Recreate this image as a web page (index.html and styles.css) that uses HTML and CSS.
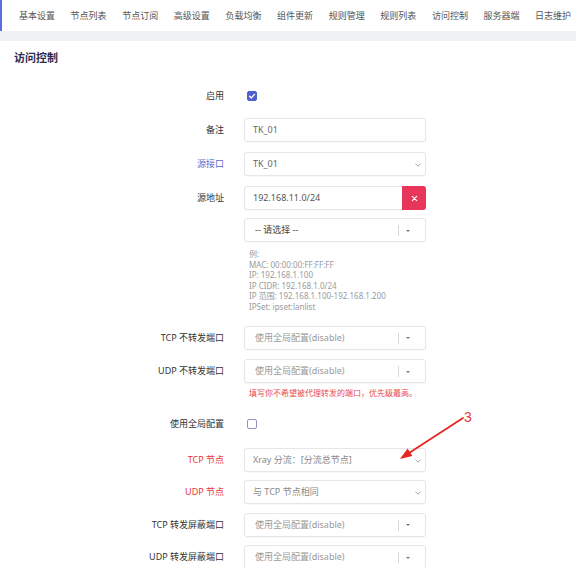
FILE: index.html
```html
<!DOCTYPE html>
<html lang="zh-CN">
<head>
<meta charset="utf-8">
<title>访问控制</title>
<link rel="stylesheet" href="styles.css">
</head>
<body>
<nav class="tabs">
  <span class="tab">基本设置</span>
  <span class="tab">节点列表</span>
  <span class="tab">节点订阅</span>
  <span class="tab">高级设置</span>
  <span class="tab">负载均衡</span>
  <span class="tab">组件更新</span>
  <span class="tab">规则管理</span>
  <span class="tab">规则列表</span>
  <span class="tab">访问控制</span>
  <span class="tab">服务器端</span>
  <span class="tab">日志维护</span>
</nav>
<div class="band"></div>
<main class="card">
  <h2 class="title">访问控制</h2>

  <div class="row r-enable">
    <div class="label">启用</div>
    <div class="control"><span class="checkbox checked"><svg viewBox="0 0 10 10" width="10" height="10"><polyline points="2.6,5.2 4.3,6.9 7.5,3.4" fill="none" stroke="#fff" stroke-width="1.4" stroke-linecap="round" stroke-linejoin="round"/></svg></span></div>
  </div>

  <div class="row r-std">
    <div class="label">备注</div>
    <div class="control"><div class="field text-dim">TK_01</div></div>
  </div>

  <div class="row r-std">
    <div class="label blue">源接口</div>
    <div class="control"><div class="field select text-dim">TK_01<svg class="chev" viewBox="0 0 6 4" width="6" height="4"><polyline points="0.5,0.6 3,3.2 5.5,0.6" fill="none" stroke="#999" stroke-width="0.9"/></svg></div></div>
  </div>

  <div class="row r-src">
    <div class="label">源地址</div>
    <div class="control">
      <div class="group">
        <div class="field grow text-mid">192.168.11.0/24</div>
        <div class="remove"><svg viewBox="0 0 8 8" width="7" height="7"><path d="M1.5 1.5 L6.5 6.5 M6.5 1.5 L1.5 6.5" stroke="#fff" stroke-width="1.3" stroke-linecap="round"/></svg></div>
      </div>
      <div class="field chosen second text-dark">-- 请选择 --<span class="divider"></span><span class="tri"></span></div>
      <div class="help">例:<br>MAC: 00:00:00:FF:FF:FF<br>IP: 192.168.1.100<br>IP CIDR: 192.168.1.0/24<br>IP 范围: 192.168.1.100-192.168.1.200<br>IPSet: ipset:lanlist</div>
    </div>
  </div>

  <div class="row r-tcpno">
    <div class="label">TCP 不转发端口</div>
    <div class="control"><div class="field chosen text-ph">使用全局配置(disable)<span class="divider"></span><span class="tri"></span></div></div>
  </div>

  <div class="row r-udpno">
    <div class="label">UDP 不转发端口</div>
    <div class="control">
      <div class="field chosen text-ph">使用全局配置(disable)<span class="divider"></span><span class="tri"></span></div>
      <div class="help red-help">填写你不希望被代理转发的端口，优先级最高。</div>
    </div>
  </div>

  <div class="row r-global">
    <div class="label">使用全局配置</div>
    <div class="control"><span class="checkbox"></span></div>
  </div>

  <div class="row r-tcpnode">
    <div class="label red">TCP 节点</div>
    <div class="control"><div class="field select text-light">Xray 分流：[分流总节点]<svg class="chev" viewBox="0 0 6 4" width="6" height="4"><polyline points="0.5,0.6 3,3.2 5.5,0.6" fill="none" stroke="#999" stroke-width="0.9"/></svg></div></div>
  </div>

  <div class="row r-udpnode">
    <div class="label red">UDP 节点</div>
    <div class="control"><div class="field select text-light">与 TCP 节点相同<svg class="chev" viewBox="0 0 6 4" width="6" height="4"><polyline points="0.5,0.6 3,3.2 5.5,0.6" fill="none" stroke="#999" stroke-width="0.9"/></svg></div></div>
  </div>

  <div class="row r-tcpblk">
    <div class="label">TCP 转发屏蔽端口</div>
    <div class="control"><div class="field chosen text-ph">使用全局配置(disable)<span class="divider"></span><span class="tri"></span></div></div>
  </div>

  <div class="row r-udpblk">
    <div class="label">UDP 转发屏蔽端口</div>
    <div class="control"><div class="field chosen text-ph">使用全局配置(disable)<span class="divider"></span><span class="tri"></span></div></div>
  </div>
</main>

<svg class="annot-arrow" viewBox="0 0 576 568" width="576" height="568">
  <line x1="463" y1="418" x2="409" y2="453" stroke="#e52622" stroke-width="1.8" stroke-linecap="round"/>
  <polygon points="400,459 412.4,456 407.6,448.6" fill="#e52622"/>
</svg>
<span class="annot-num">3</span>
</body>
</html>
```

FILE: styles.css
```css
* { box-sizing: border-box; }

html, body {
  margin: 0;
  padding: 0;
  background: #fff;
  width: 576px;
  height: 568px;
  overflow: hidden;
  position: relative;
  font-family: "Noto Sans", "Noto Sans CJK SC", sans-serif;
}

.tabs {
  height: 31px;
  display: flex;
  align-items: center;
  gap: 15.6px;
  padding-left: 17px;
  border-left: 2px solid #5a6ee0;
  background: #fff;
}

.tab {
  font-size: 9px;
  line-height: 12px;
  color: #555;
  white-space: nowrap;
}

.band {
  height: 10px;
  background: #f0f1f4;
}

.card {
  display: block;
  padding: 9px 14px 0;
  background: #fff;
}

.title {
  margin: 0 0 19px;
  font-size: 11px;
  line-height: 15px;
  font-weight: 700;
  color: #2c2c4c;
}

.row {
  display: flex;
  align-items: flex-start;
  gap: 20px;
}

.label {
  width: 210px;
  height: 24px;
  line-height: 24px;
  text-align: right;
  font-size: 9px;
  color: #333;
  white-space: nowrap;
}

.label.blue { color: #5a68cc; }
.label.red { color: #e8343a; }

.control {
  width: 182px;
  display: flex;
  flex-direction: column;
}

.r-enable { margin-bottom: 10px; }
.r-std { margin-bottom: 10px; }
.r-src { margin-bottom: 13px; }
.r-tcpno { margin-bottom: 9.5px; }
.r-udpno { margin-bottom: 14px; }
.r-global { margin-bottom: 11.5px; }
.r-tcpnode { margin-bottom: 8px; }
.r-udpnode { margin-bottom: 9px; }
.r-tcpblk { margin-bottom: 8.5px; }

.checkbox {
  display: block;
  width: 10.5px;
  height: 10.5px;
  margin: 6.5px 0 0 2.5px;
  border: 1px solid #8e95c4;
  border-radius: 2px;
  background: #fff;
}

.checkbox.checked {
  border-color: #4f5fd0;
  background: #4f5fd0;
}

.checkbox svg { display: block; margin: -0.75px; }

.field {
  position: relative;
  height: 24px;
  line-height: 22px;
  padding: 0 8px;
  border: 1px solid #e6e6e9;
  border-radius: 3px;
  box-shadow: 0 1px 1px rgba(0, 0, 0, 0.03);
  font-size: 9px;
  white-space: nowrap;
  background: #fff;
}

.text-dim { color: #666; }
.text-mid { color: #555; }
.text-dark { color: #444; }
.text-ph { color: #999; }
.text-light { color: #888; }

.chev {
  position: absolute;
  right: 4px;
  top: 10px;
}

.chosen { padding-left: 10px; }

.divider {
  position: absolute;
  right: 26px;
  top: 6px;
  width: 1px;
  height: 11px;
  background: #d8d8dc;
}

.tri {
  position: absolute;
  right: 15px;
  top: 10.5px;
  width: 0;
  height: 0;
  border-left: 2px solid transparent;
  border-right: 2px solid transparent;
  border-top: 2.5px solid #777;
}

.group {
  display: flex;
  height: 24px;
}

.group .grow {
  flex: 1;
  border-right: none;
  border-radius: 3px 0 0 3px;
}

.remove {
  width: 24px;
  height: 24px;
  background: #e8365a;
  border-radius: 0 3px 3px 0;
  display: flex;
  align-items: center;
  justify-content: center;
}

.remove svg { display: block; }

.second { margin-top: 8px; }

.help {
  margin: 7px 0 0 5px;
  font-size: 8px;
  line-height: 10.6px;
  color: #9a9a9a;
  white-space: nowrap;
}

.red-help {
  margin-top: 4px;
  line-height: 11px;
  color: #e84b4b;
}

.annot-arrow {
  position: absolute;
  left: 0;
  top: 0;
  pointer-events: none;
}

.annot-num {
  position: absolute;
  left: 464px;
  top: 409px;
  font-family: "Liberation Sans", sans-serif;
  font-size: 14px;
  line-height: 16px;
  color: #e53a34;
}
```
